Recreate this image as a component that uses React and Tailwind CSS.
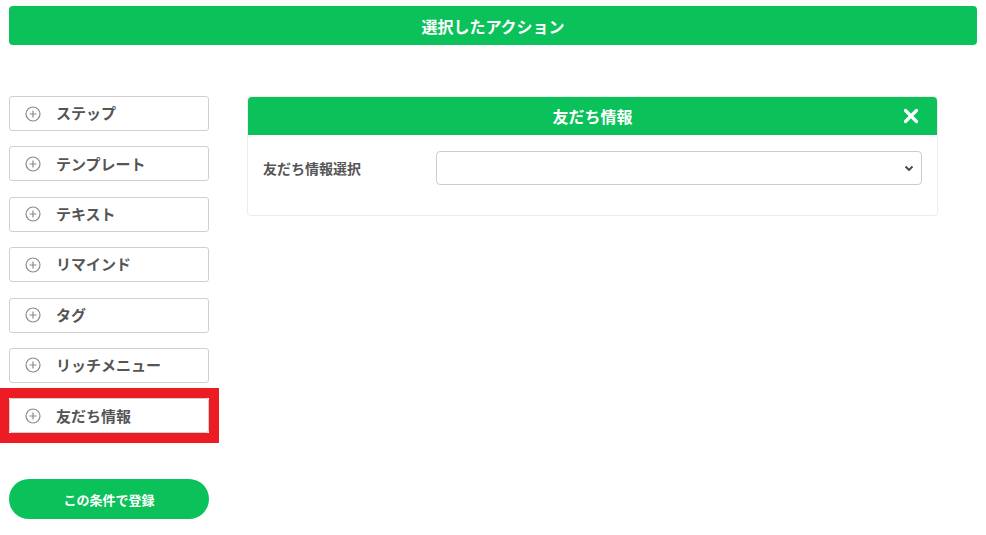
import React from 'react'

const font = { fontFamily: '"Noto Sans CJK JP", "Noto Sans", sans-serif' }

const items = ['ステップ', 'テンプレート', 'テキスト', 'リマインド', 'タグ', 'リッチメニュー']

function PlusCircle() {
    return (
        <svg width="16" height="16" viewBox="0 0 16 16" className="shrink-0">
            <circle cx="8" cy="8" r="7" fill="none" stroke="#8a8a8a" strokeWidth="1.2" />
            <path d="M8 4.5v7M4.5 8h7" stroke="#8a8a8a" strokeWidth="1.2" />
        </svg>
    )
}

function MenuItem({ label }) {
    return (
        <div className="h-[35px] border border-[#cfcfcf] rounded-[3px] bg-white flex items-center pl-[15px] gap-[15px]">
            <PlusCircle />
            <span className="text-[15px] font-bold text-[#555]">{label}</span>
        </div>
    )
}

const App = () => {
    return (
        <div className="w-[986px] h-[535px] bg-white overflow-hidden" style={font}>
            <div className="mx-[9px] mt-[6px] h-[39px] rounded-[4px] bg-[#0bc15a] flex items-center justify-center">
                <span className="text-white font-bold text-[16px]">選択したアクション</span>
            </div>

            <div className="flex mt-[51px] px-[9px]">
                {/* left menu */}
                <div className="w-[200px] shrink-0 flex flex-col">
                    <div className="flex flex-col gap-[15.4px]">
                        {items.map((label) => (
                            <MenuItem key={label} label={label} />
                        ))}
                        {/* highlighted item */}
                        <div className="-ml-[9px] -mr-[10px] -my-[10px] border-l-[9px] border-r-[10px] border-y-[10px] border-[#ed1c24]">
                            <MenuItem label="友だち情報" />
                        </div>
                    </div>
                    <button className="mt-[46px] h-[40px] w-[200px] rounded-full bg-[#0bc15a] text-white font-bold text-[13px]">
                        この条件で登録
                    </button>
                </div>

                {/* right panel */}
                <div className="ml-[38px] w-[691px] self-start border border-[#ececec] rounded-[4px]">
                    <div className="h-[38px] bg-[#0bc15a] rounded-t-[4px] flex items-center justify-center relative">
                        <span className="text-white font-bold text-[16px]">友だち情報</span>
                        <svg className="absolute right-[18px] top-[11px]" width="16" height="16" viewBox="0 0 16 16">
                            <path d="M2.5 2.5l11 11M13.5 2.5l-11 11" stroke="#fff" strokeWidth="3.2" strokeLinecap="round" />
                        </svg>
                    </div>
                    <div className="flex items-center pt-[16px] pb-[30px] px-[15px]">
                        <div className="w-[173px] text-[14px] font-bold text-[#555]">友だち情報選択</div>
                        <div className="flex-1 relative">
                            <select className="w-full h-[34px] border border-[#cccccc] rounded-[4px] bg-white appearance-none">
                                <option></option>
                            </select>
                            <svg className="absolute right-[8px] top-[14px] pointer-events-none" width="10" height="7" viewBox="0 0 10 7">
                                <path d="M1.5 1.5L5 5l3.5-3.5" fill="none" stroke="#444" strokeWidth="1.8" />
                            </svg>
                        </div>
                    </div>
                </div>
            </div>
        </div>
    )
}

export default App
